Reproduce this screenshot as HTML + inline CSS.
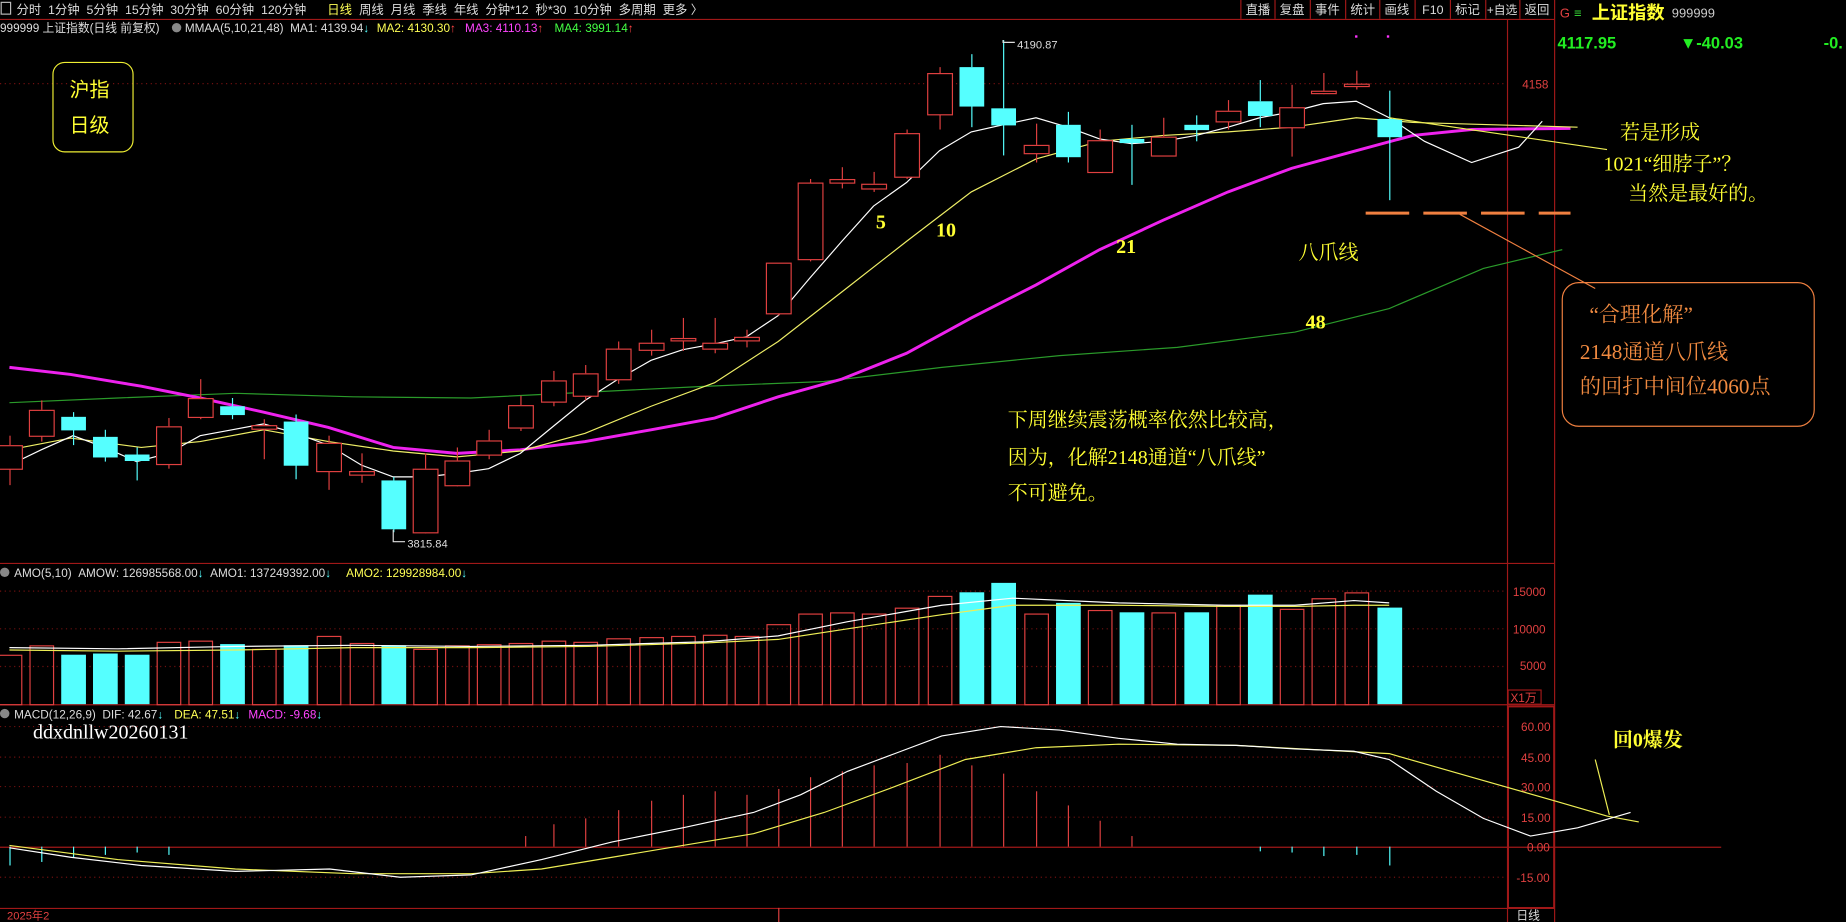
<!DOCTYPE html>
<html><head><meta charset="utf-8"><style>
html,body{margin:0;padding:0;background:#000;overflow:hidden}
svg{display:block}
.t{font-family:"Liberation Sans","Noto Sans CJK SC",sans-serif}
.s{font-family:"Liberation Serif","Noto Serif CJK SC",serif;font-weight:bold}
</style></head><body>
<svg width="1846" height="922" viewBox="0 0 1568 783" preserveAspectRatio="none" xmlns="http://www.w3.org/2000/svg">
<rect width="1568" height="783" fill="#000"/>
<g class="t" font-size="10.5" fill="#ddd">
<rect x="1" y="2" width="8" height="10" fill="none" stroke="#bbb"/>
<text x="14" y="12">分时 &#160;1分钟 &#160;5分钟 &#160;15分钟 &#160;30分钟 &#160;60分钟 &#160;120分钟</text>
<text x="278" y="12" fill="#ffff55">日线</text>
<text x="305" y="12">周线 &#160;月线 &#160;季线 &#160;年线 &#160;分钟*12 &#160;秒*30 &#160;10分钟 &#160;多周期 &#160;更多 〉</text>
</g>
<line x1="0" y1="16.5" x2="1320" y2="16.5" stroke="#a01818"/>
<g stroke="#a01818"><line x1="1054" y1="0" x2="1054" y2="16"/><line x1="1083" y1="0" x2="1083" y2="16"/><line x1="1113" y1="0" x2="1113" y2="16"/><line x1="1143" y1="0" x2="1143" y2="16"/><line x1="1172" y1="0" x2="1172" y2="16"/><line x1="1202" y1="0" x2="1202" y2="16"/><line x1="1232" y1="0" x2="1232" y2="16"/><line x1="1262" y1="0" x2="1262" y2="16"/><line x1="1291" y1="0" x2="1291" y2="16"/></g>
<g class="t" font-size="10.5" fill="#ddd"><text x="1058" y="12">直播</text><text x="1087" y="12">复盘</text><text x="1117" y="12">事件</text><text x="1147" y="12">统计</text><text x="1176" y="12">画线</text><text x="1208" y="12">F10</text><text x="1236" y="12">标记</text><text x="1263" y="12" font-size="10">+自选</text><text x="1295" y="12">返回</text></g>
<g class="t" font-size="10">
<text x="0" y="27" fill="#ddd">999999 上证指数(日线 前复权)</text>
<circle cx="150" cy="23.5" r="4" fill="#888"/>
<text x="157" y="27" fill="#ddd">MMAA(5,10,21,48) &#160;MA1: 4139.94<tspan fill="#5ff">↓</tspan></text>
<text x="320" y="27" fill="#ffff55">MA2: 4130.30<tspan fill="#f44">↑</tspan></text>
<text x="395" y="27" fill="#ff44ff">MA3: 4110.13<tspan fill="#f44">↑</tspan></text>
<text x="471" y="27" fill="#4f4">MA4: 3991.14<tspan fill="#f44">↑</tspan></text>
</g>
<g stroke="#a01818" fill="none">
<line x1="1280.5" y1="17" x2="1280.5" y2="783"/>
<line x1="1320.5" y1="0" x2="1320.5" y2="783"/>
<line x1="0" y1="478.5" x2="1320" y2="478.5"/>
<line x1="0" y1="598.5" x2="1320" y2="598.5"/>
<line x1="0" y1="771.5" x2="1320" y2="771.5"/>
<line x1="0" y1="719.5" x2="1462" y2="719.5"/>
</g>
<g stroke="#701010" stroke-dasharray="1,3"><line x1="0" y1="71" x2="1280" y2="71"/><line x1="0" y1="502" x2="1280" y2="502"/><line x1="0" y1="534" x2="1280" y2="534"/><line x1="0" y1="566" x2="1280" y2="566"/><line x1="0" y1="617" x2="1280" y2="617"/><line x1="0" y1="643" x2="1280" y2="643"/><line x1="0" y1="668" x2="1280" y2="668"/><line x1="0" y1="694" x2="1280" y2="694"/><line x1="0" y1="745" x2="1280" y2="745"/></g>
<g class="t" font-size="10" fill="#e04040">
<text x="1293" y="75">4158</text>
<text x="1285" y="506">15000</text><text x="1285" y="538">10000</text><text x="1291" y="569">5000</text>
<text x="1283" y="596">X1万</text>
<text x="1292" y="621">60.00</text><text x="1292" y="647">45.00</text><text x="1292" y="672">30.00</text><text x="1292" y="698">15.00</text><text x="1297" y="723">0.00</text><text x="1288" y="749">-15.00</text>
</g>
<rect x="1281" y="586" width="28" height="12" fill="none" stroke="#a01818"/>
<rect x="1281" y="600" width="39" height="171" fill="none" stroke="#a01818" stroke-width="1.5"/>
<polyline fill="none" stroke="#2a9a2a" stroke-width="1" points="8,342 100,338 200,334 300,337 400,338 500,333 600,328 700,324 800,312 900,302 1000,295 1100,282 1180,262 1260,228 1327,212"/>
<polyline fill="none" stroke="#ee22ee" stroke-width="2.5" points="8,312 60,318 120,328 170,338 224,350 279,363 334,380 388,385 442,382 497,375 553,365 607,355 661,337 715,322 770,300 825,270 880,242 934,212 988,187 1043,163 1097,143 1152,128 1200,115 1250,110 1334,109"/>
<polyline fill="none" stroke="#eeee66" stroke-width="1" points="8,382 60,372 120,380 170,375 224,365 279,375 334,383 388,388 442,383 497,368 553,345 607,325 661,290 715,248 770,205 825,163 880,135 934,120 988,115 1043,112 1097,108 1152,100 1200,104 1340,108"/>
<polyline fill="none" stroke="#fff" stroke-width="1" points="8,395 35,382 62,370 89,380 116,392 143,385 170,370 197,365 224,360 251,368 279,378 307,395 334,405 361,405 388,402 415,398 442,385 470,362 497,340 525,322 553,306 580,297 607,292 634,286 661,268 688,236 715,205 742,175 770,155 798,128 825,112 852,106 880,100 907,108 934,118 961,122 988,120 1016,115 1043,108 1070,100 1097,95 1124,88 1152,86 1180,100 1210,120 1250,138 1290,125 1310,103"/>
<g id="candles" stroke-width="1"></g>
<g id="vol"></g>
<g id="macd"></g>
<polyline fill="none" stroke="#eeee55" stroke-width="1" points="8,718 100,730 200,738 300,742 400,742 460,738 520,728 580,718 640,708 700,690 760,668 820,645 880,635 950,632 1050,633 1180,640 1250,660 1320,680 1365,693 1392,698"/>
<polyline fill="none" stroke="#fff" stroke-width="1" points="8,720 60,728 120,735 200,740 280,738 340,745 400,743 460,730 520,715 580,703 640,690 680,675 720,655 760,640 800,625 850,617 900,620 950,627 1000,632 1050,633 1100,636 1150,638 1180,645 1220,672 1260,695 1300,710 1340,703 1385,690"/>
<polyline fill="none" stroke="#fff" points="8,550 100,551 200,549 300,548 400,549 500,548 600,545 661,540 720,528 800,514 860,508 950,512 1040,514 1100,514 1150,510 1180,512"/>
<polyline fill="none" stroke="#eeee55" points="8,552 100,553 200,552 300,550 400,550 500,549 600,546 661,543 720,534 800,522 860,514 950,514 1040,515 1100,515 1150,514 1180,514"/>
<g class="t" font-size="9.5" fill="#ddd"><text x="864" y="41">4190.87</text><text x="346" y="465">3815.84</text></g>
<polyline points="852,34 852,36 862,36" fill="none" stroke="#ddd"/><polyline points="334,450 334,460 344,460" fill="none" stroke="#ddd"/>
<rect x="1151" y="30" width="2" height="2" fill="#ff33ff"/><rect x="1178" y="30" width="2" height="2" fill="#ff33ff"/>
<rect x="45" y="53" width="68" height="76" rx="10" fill="none" stroke="#eeee33"/>
<g font-size="17" fill="#ffff33" style="font-family:'Noto Sans CJK SC',sans-serif"><text x="59" y="82">沪指</text><text x="59" y="112">日级</text></g>
<g class="s" font-size="17" fill="#ffff33"><text x="744" y="194">5</text><text x="795" y="201">10</text><text x="948" y="215">21</text><text x="1109" y="279">48</text></g>
<g font-size="17" fill="#ffff33" style="font-family:'Liberation Serif','Noto Serif CJK SC',serif">
<text x="1103" y="220">八爪线</text>
<text x="856" y="362">下周继续震荡概率依然比较高，</text>
<text x="856" y="394">因为，化解2148通道“八爪线”</text>
<text x="856" y="424">不可避免。</text>
<text x="1376" y="118">若是形成</text>
<text x="1362" y="145">1021“细脖子”？</text>
<text x="1383" y="170">当然是最好的。</text>
<text x="1370" y="634" font-weight="bold">回0爆发</text>
</g>
<line x1="1180" y1="100" x2="1365" y2="127" stroke="#eeee55"/>
<line x1="1355" y1="645" x2="1367" y2="692" stroke="#eeee55"/>
<line x1="1160" y1="181" x2="1334" y2="181" stroke="#f08040" stroke-width="2.5" stroke-dasharray="37,12"/>
<line x1="1240" y1="182" x2="1355" y2="245" stroke="#f08040"/>
<rect x="1327" y="240" width="214" height="122" rx="14" fill="none" stroke="#f08040"/>
<g font-size="18" fill="#f08a40" style="font-family:'Liberation Serif','Noto Serif CJK SC',serif"><text x="1350" y="273">“合理化解”</text><text x="1342" y="305">2148通道八爪线</text><text x="1342" y="334">的回打中间位4060点</text></g>
<g class="t" font-size="10"><circle cx="4" cy="486" r="4" fill="#888"/>
<text x="12" y="490" fill="#ddd">AMO(5,10) &#160;AMOW: 126985568.00<tspan fill="#5ff">↓</tspan> &#160;AMO1: 137249392.00<tspan fill="#5ff">↓</tspan></text>
<text x="294" y="490" fill="#ffff55">AMO2: 129928984.00<tspan fill="#5ff">↓</tspan></text>
<circle cx="4" cy="606" r="4" fill="#888"/>
<text x="12" y="610" fill="#ddd">MACD(12,26,9) &#160;DIF: 42.67<tspan fill="#5ff">↓</tspan></text>
<text x="148" y="610" fill="#ffff55">DEA: 47.51<tspan fill="#5ff">↓</tspan></text>
<text x="211" y="610" fill="#ff44ff">MACD: -9.68<tspan fill="#5ff">↓</tspan></text>
</g>
<text x="28" y="627" font-size="17" fill="#fff" style="font-family:'Liberation Serif',serif">ddxdnllw20260131</text>
<text class="t" x="6" y="781" font-size="9.5" fill="#e04040">2025年2</text>
<line x1="661.5" y1="771" x2="661.5" y2="783" stroke="#e04040"/>
<text class="t" x="1288" y="781" font-size="10" fill="#ddd">日线</text>
<g class="t">
<text x="1325" y="15" font-size="11" fill="#e04040">G</text>
<text x="1337" y="15" font-size="11" fill="#3c3">≡</text>
<text x="1352" y="16" font-size="15.5" font-weight="bold" fill="#ffff33" style="font-family:'Noto Sans CJK SC',sans-serif">上证指数</text>
<text x="1420" y="15" font-size="11" fill="#ccc">999999</text>
<g font-size="14" font-weight="bold" fill="#2e2"><text x="1323" y="41">4117.95</text><text x="1427" y="41">▼-40.03</text><text x="1549" y="41">-0.</text></g>
</g>
<script>
var C=[[8,'r',378,398,370,412],[35,'r',348,370,340,375],[62,'c',354,365,350,378],[89,'c',371,388,365,392],[116,'c',386,391,380,408],[143,'r',362,394,355,398],[170,'r',338,354,322,356],[197,'c',345,352,338,356],[224,'r',361,364,356,390],[251,'c',358,395,352,407],[279,'r',376,400,370,416],[307,'r',400,403,385,410],[334,'c',408,449,405,452],[361,'r',398,452,385,453],[388,'r',391,412,380,413],[415,'r',374,386,365,390],[442,'r',344,363,336,366],[470,'r',323,341,315,345],[497,'r',317,336,310,340],[525,'r',296,322,290,326],[553,'r',291,297,280,302],[580,'r',287,289,270,298],[607,'r',291,296,270,300],[634,'r',286,289,280,295],[661,'r',223,266,223,268],[688,'r',155,220,152,222],[715,'r',152,155,142,160],[742,'r',156,160,146,163],[770,'r',113,150,110,152],[798,'r',62,97,57,110],[825,'c',57,90,46,108],[852,'c',92,106,34,132],[880,'r',123,130,105,138],[907,'c',106,133,95,138],[934,'r',119,146,110,146],[961,'c',118,121,106,157],[988,'r',116,132,100,132],[1016,'c',106,110,98,120],[1043,'r',94,103,85,110],[1070,'c',86,98,68,108],[1097,'r',91,108,72,133],[1124,'r',77,79,62,80],[1152,'r',71,73,60,76],[1180,'c',101,116,77,170]];
var V=[556,548,556,555,556,545,544,547,551,548,540,546,548,551,548,547,546,544,545,542,541,540,539,540,530,521,520,521,516,506,503,495,521,512,518,520,520,520,514,505,517,508,503,516];
var M=[[8,735],[35,732],[62,728],[89,726],[116,724],[143,726],[446,710],[470,700],[497,695],[525,688],[553,680],[580,675],[607,672],[634,675],[661,670],[688,660],[715,655],[742,650],[770,648],[798,641],[825,650],[852,657],[880,672],[907,684],[934,697],[961,710],[1070,723],[1097,724],[1124,727],[1152,726],[1180,735]];
var ns='http://www.w3.org/2000/svg';function el(p,t,a){var e=document.createElementNS(ns,t);for(var k in a)e.setAttribute(k,a[k]);p.appendChild(e);}
var g=document.getElementById('candles'),v=document.getElementById('vol'),m=document.getElementById('macd');
C.forEach(function(c,i){var x=c[0],red=c[1]=='r',col=red?'#e04040':'#55ffff';
el(g,'line',{x1:x+.5,y1:c[4],x2:x+.5,y2:c[2],stroke:col});el(g,'line',{x1:x+.5,y1:c[3],x2:x+.5,y2:c[5],stroke:col});
var h=Math.max(c[3]-c[2],1);
if(red)el(g,'rect',{x:x-10,y:c[2]+.5,width:21,height:h,fill:'#000',stroke:col});else el(g,'rect',{x:x-10,y:c[2],width:21,height:h+.5,fill:col});
var t=V[i];if(red)el(v,'rect',{x:x-10+.5,y:t+.5,width:20,height:598-t,fill:'none',stroke:'#e04040'});else el(v,'rect',{x:x-10,y:t,width:21,height:598-t,fill:'#55ffff'});});
M.forEach(function(b){var up=b[1]<719;el(m,'line',{x1:b[0]+.5,y1:719,x2:b[0]+.5,y2:b[1],stroke:up?'#e04040':'#55ffff'});});
</script>
</svg>
</body></html>
